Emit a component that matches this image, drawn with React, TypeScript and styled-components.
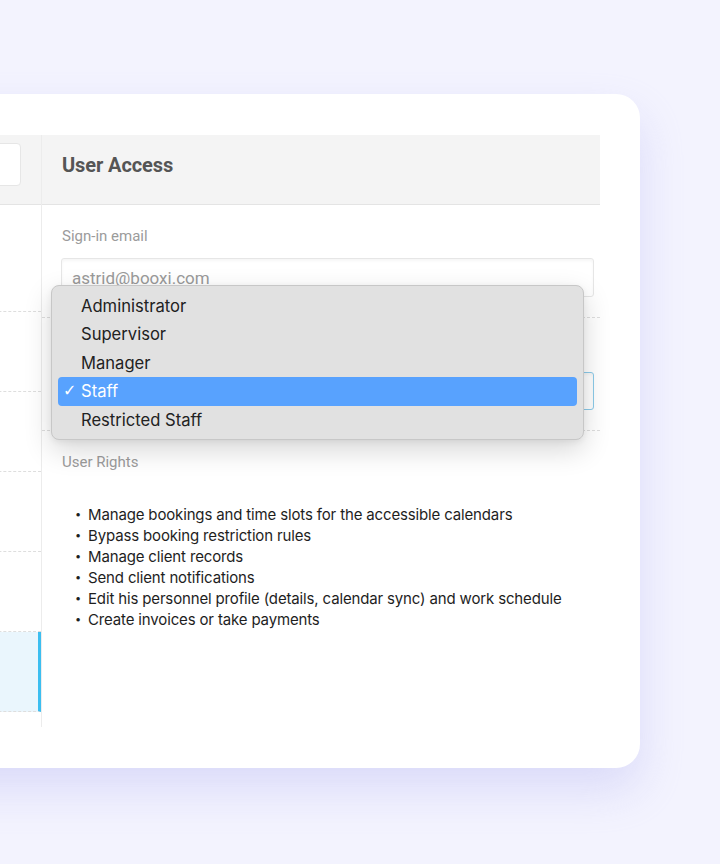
import React from 'react';
import styled, { createGlobalStyle } from 'styled-components';

const GlobalStyle = createGlobalStyle`
  html, body {
    margin: 0;
    padding: 0;
    background: #f3f3fe;
    font-family: Roboto, "Liberation Sans", sans-serif;
    overflow: hidden;
  }
  * { box-sizing: border-box; }
`;

const Page = styled.div`
  width: 720px;
  height: 864px;
  padding-top: 94px;
  overflow: hidden;
`;

const Card = styled.div`
  margin-left: -200px;
  width: 840px;
  height: 674px;
  padding: 41px 40px 41px 40px;
  background: #ffffff;
  border-radius: 24px;
  box-shadow: 0 22px 44px rgba(190, 190, 245, 0.45);
  display: flex;
`;

const SideColumn = styled.div`
  width: 202px;
  border-right: 1px solid #ececec;
  display: flex;
  flex-direction: column;
`;

const SideHeader = styled.div`
  height: 70px;
  background: #f4f4f4;
  border-bottom: 1px solid #e4e4e4;
  padding: 8px 20px 18px 0;
  display: flex;
`;

const SearchBox = styled.div`
  flex: 1;
  background: #ffffff;
  border: 1px solid #e6e6e6;
  border-radius: 4px;
`;

const SideRow = styled.div<{ $tall?: boolean; $active?: boolean }>`
  height: ${(p) => (p.$tall ? '107px' : '80px')};
  border-bottom: 1px dashed #dedede;
  background: ${(p) => (p.$active ? '#eaf6fd' : 'transparent')};
  border-right: ${(p) => (p.$active ? '3px solid #3cbef0' : '0')};
`;

const Panel = styled.div`
  flex: 1;
  display: flex;
  flex-direction: column;
`;

const PanelHeader = styled.div`
  height: 70px;
  background: #f4f4f4;
  border-bottom: 1px solid #e4e4e4;
  padding: 0 20px 9px 20px;
  display: flex;
  align-items: center;
`;

const Title = styled.h2`
  margin: 0;
  font-family: Roboto, "Liberation Sans", sans-serif;
  font-size: 20px;
  font-weight: 700;
  color: #555555;
  letter-spacing: -0.1px;
`;

const PanelBody = styled.div`
  position: relative;
  flex: 1;
`;

const Section = styled.div<{ $divider?: boolean }>`
  padding: 21px 6px 20px 20px;
  border-bottom: ${(p) => (p.$divider ? '1px dashed #dedede' : '0')};
`;

const Label = styled.div<{ $gap?: number }>`
  font-size: 15px;
  line-height: 20px;
  height: 20px;
  color: #9b9b9b;
  margin-bottom: ${(p) => p.$gap ?? 12}px;
`;

const Field = styled.div<{ $focused?: boolean }>`
  margin-left: -1px;
  height: ${(p) => (p.$focused ? '38px' : '39px')};
  border: 1px solid ${(p) => (p.$focused ? '#8ccbea' : '#e6e6e6')};
  border-radius: 3px;
  box-shadow: inset 0 2px 3px rgba(0, 0, 0, 0.04);
  padding: 0 10px;
  display: flex;
  align-items: center;
  font-size: 17px;
  color: #9a9a9a;
`;

const RightsList = styled.ul`
  list-style: none;
  margin: 32px 0 0 0;
  padding: 0 0 0 13px;
  font-family: Inter, "Noto Sans", sans-serif;
  font-size: 15px;
  line-height: 21px;
  color: #1e1e1e;
  letter-spacing: -0.15px;
`;

const RightsItem = styled.li`
  display: flex;
  &::before {
    content: '•';
    width: 13px;
    font-size: 11px;
    flex: none;
  }
`;

const Menu = styled.div`
  position: absolute;
  left: 9px;
  top: 80px;
  width: 533px;
  height: 155px;
  padding: 5.5px 6px;
  background: #e1e1e1;
  border: 1px solid #c7c7c7;
  border-radius: 8px;
  box-shadow: 0 10px 28px rgba(0, 0, 0, 0.16), 0 2px 6px rgba(0, 0, 0, 0.06);
  font-family: Inter, "Noto Sans", sans-serif;
`;

const MenuItem = styled.div<{ $selected?: boolean }>`
  height: 28.5px;
  padding-left: 5px;
  display: flex;
  align-items: center;
  font-size: 16.6px;
  color: ${(p) => (p.$selected ? '#ffffff' : '#222222')};
  background: ${(p) => (p.$selected ? '#58a2fe' : 'transparent')};
  border-radius: 4px;
`;

const Check = styled.span`
  width: 18px;
  flex: none;
  font-size: 16px;
  line-height: 1;
  font-family: "DejaVu Sans", sans-serif;
`;

const roles = ['Administrator', 'Supervisor', 'Manager', 'Staff', 'Restricted Staff'];

const rights = [
  'Manage bookings and time slots for the accessible calendars',
  'Bypass booking restriction rules',
  'Manage client records',
  'Send client notifications',
  'Edit his personnel profile (details, calendar sync) and work schedule',
  'Create invoices or take payments',
];

export default function App() {
  return (
    <Page>
      <GlobalStyle />
      <Card>
        <SideColumn>
          <SideHeader>
            <SearchBox />
          </SideHeader>
          <SideRow $tall />
          <SideRow />
          <SideRow />
          <SideRow />
          <SideRow />
          <SideRow $active />
        </SideColumn>
        <Panel>
          <PanelHeader>
            <Title>User Access</Title>
          </PanelHeader>
          <PanelBody>
            <Section $divider>
              <Label>Sign-in email</Label>
              <Field>astrid@booxi.com</Field>
            </Section>
            <Section $divider>
              <Label $gap={13} />
              <Field $focused />
            </Section>
            <Section>
              <Label>User Rights</Label>
              <RightsList>
                {rights.map((r) => (
                  <RightsItem key={r}>{r}</RightsItem>
                ))}
              </RightsList>
            </Section>
            <Menu>
              {roles.map((role) => (
                <MenuItem key={role} $selected={role === 'Staff'}>
                  <Check>{role === 'Staff' ? '✓' : ''}</Check>
                  {role}
                </MenuItem>
              ))}
            </Menu>
          </PanelBody>
        </Panel>
      </Card>
    </Page>
  );
}
